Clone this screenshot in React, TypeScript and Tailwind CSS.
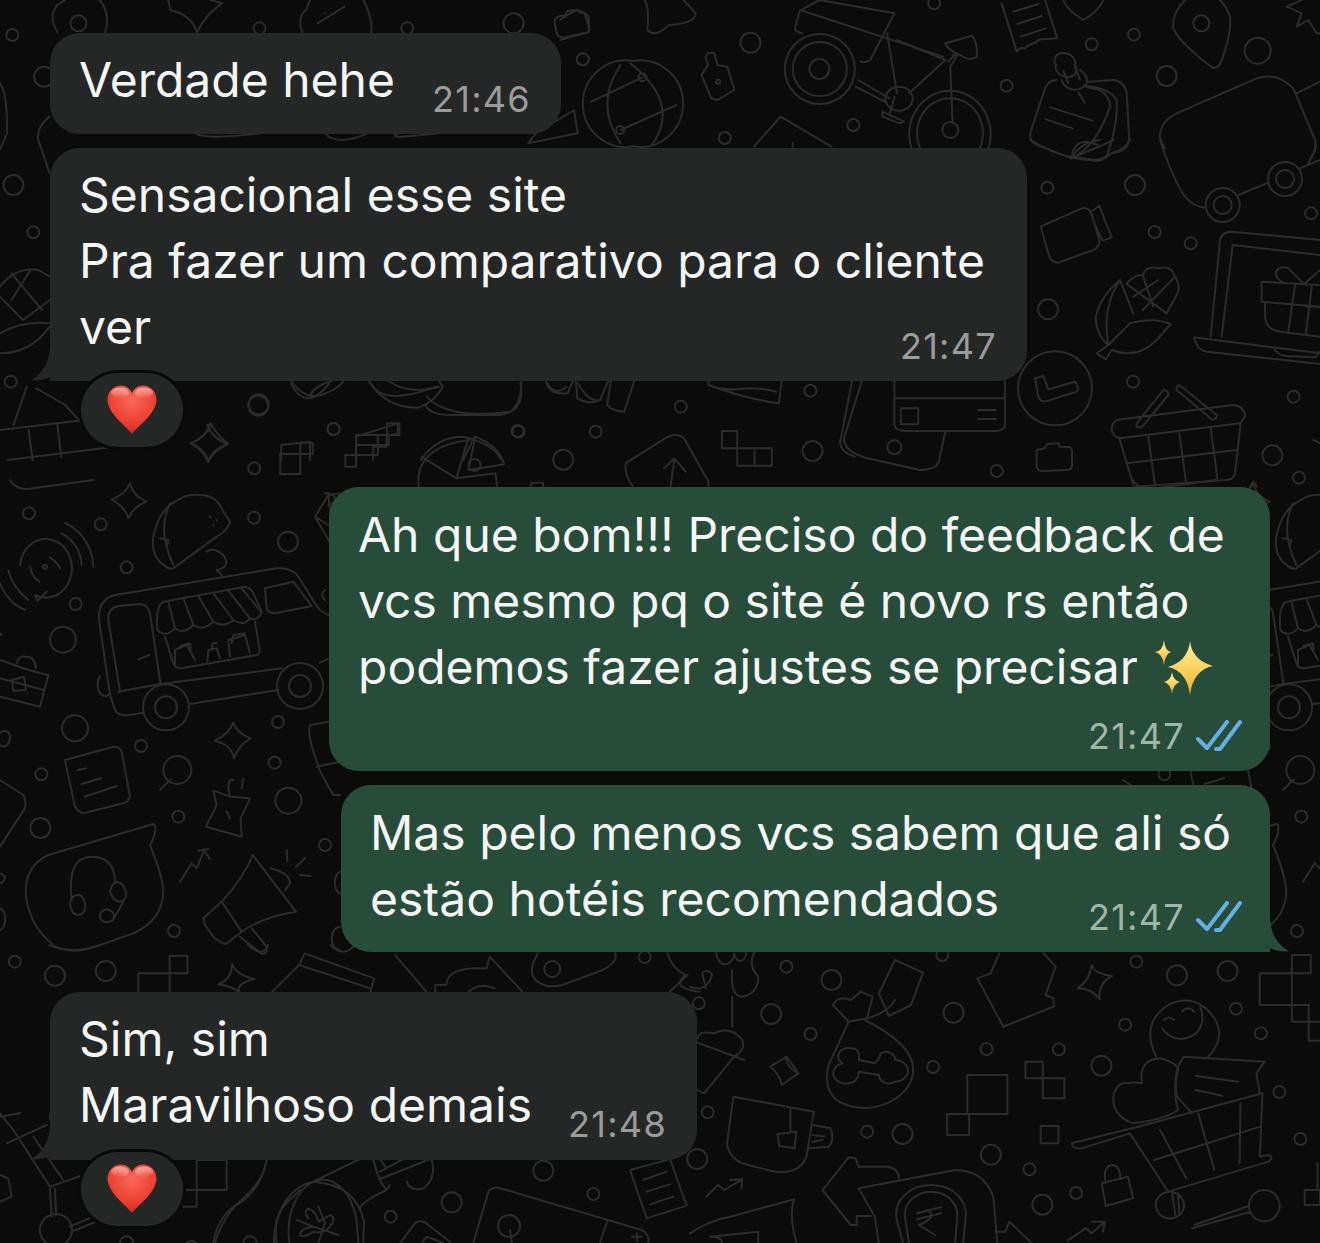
import React from "react";

type C = [number, number, number];
function Z({ x, y, sx = 3, sy = 3, c = [], p = [] }: { x: number; y: number; sx?: number; sy?: number; c?: C[]; p?: string[] }) {
  return (
    <g transform={`translate(${x} ${y}) scale(${1 / sx} ${1 / sy})`}>
      {c.map(([cx, cy, r], i) => (
        <ellipse key={i} cx={cx} cy={cy} rx={r * sx} ry={r * sy} vectorEffect="non-scaling-stroke" />
      ))}
      {p.map((d, i) => (
        <path key={i} d={d} vectorEffect="non-scaling-stroke" />
      ))}
    </g>
  );
}

const truckC: C[] = [[87,100,6],[302,133,6],[380,262,6],[227,372,6],[189,479,13],[762,113,6],[864,185,10],[225,745,13],[423,798,6],[124,883,6],[535,1010,6],[121,1044,10],[522,1353,6],[834,726,6],[824,848,6],[865,962,13],[975,1095,6],[498,682,23],[498,682,11],[900,618,23],[900,618,11],[532,870,14],[135,260,2]];
const truckP: string[] = [
  "M300 440 L330 645 L345 690 Q355 708 385 706 L430 698 M300 440 Q285 360 345 345 L830 265 Q875 262 895 290 L945 370 Q960 395 985 405",
  "M570 672 L835 630 M355 635 L480 612 L845 565 M960 548 L985 536",
  "M360 635 L325 420 Q322 385 355 378 L420 372 Q445 375 450 400 L482 615 M415 538 L448 525",
  "M795 325 L880 305 L935 378 L825 400 Q805 400 800 385 Z",
  "M472 450 Q465 380 490 365 L735 320 Q755 325 760 340 L785 395 Q775 425 750 415 Q730 440 700 420 Q670 445 640 425 Q610 455 580 435 Q550 465 525 445 Q495 475 472 450 Z",
  "M505 365 L525 445 M550 355 L580 435 M595 348 L640 425 M640 340 L700 420 M685 332 L750 415 M725 325 L783 395",
  "M495 470 L520 550 Q525 565 545 565 L770 525 Q782 520 778 505 L765 425",
  "M525 560 L525 510 L560 495 L585 540 M540 498 L570 490 L572 510 M622 545 L625 510 L650 505 L660 535 M635 505 L638 490 L650 490 M690 530 L685 480 L735 465 L750 520 M695 490 L700 465 L735 460",
  "M510 265 Q450 240 460 170 Q475 90 530 62 Q560 40 600 45 Q650 45 670 95 L690 125 Q685 150 650 170 L520 265 Q505 270 490 255 M510 70 Q470 150 520 255 M480 175 L505 180 L500 200",
  "M630 110 l1 1 M650 120 l1 1 M640 135 l1 1 M620 215 Q640 200 670 225 Q695 260 650 270 L665 285",
  "M390 10 Q400 50 440 65 Q400 80 385 115 Q375 80 335 58 Q375 45 390 10 Z",
  "M700 728 Q710 760 752 775 Q715 795 702 835 Q695 795 645 782 Q690 760 700 728 Z",
  "M60 255 A78 88 0 1 1 105 345 L112 362 L140 335 M90 260 Q95 290 118 305 M150 232 Q175 250 180 265 M185 160 Q240 190 245 255 M195 128 Q275 170 280 260 M25 270 Q35 320 85 360 M0 310 Q25 370 75 390",
  "M0 540 L85 570 L145 585 L120 680 L0 650 M0 595 L130 630 M35 600 L72 590 L78 630 L40 632 Z M50 550 Q55 525 80 530 Q105 530 108 565",
  "M195 840 L340 800 Q360 800 365 815 L390 950 Q385 965 370 970 L250 1000 Q235 995 225 980 Z M233 870 L258 865 M245 912 L303 895 M255 950 L350 918",
  "M480 930 L512 898","M0 900 L70 945 Q85 975 65 1000 L0 1100",
  "M700 900 Q685 895 685 925 L690 950 L640 932 L650 975 L618 1040 L725 1070 L722 1015 L750 955 L690 950 M730 895 L725 925 M680 995 L690 1015",
  "M540 1205 L575 1150 L590 1165 L612 1112 L630 1137 M595 1112 L625 1107",
  "M610 1315 L665 1265 Q730 1195 758 1125 L888 1295 Q790 1310 725 1355 L678 1392 Q660 1390 640 1370 L615 1335 Z M665 1265 L725 1355 M720 1370 L785 1422 Q805 1420 800 1400 L755 1345",
  "M812 1165 Q870 1180 870 1210 L855 1232 M860 1110 L862 1145 M888 1160 L915 1135 M900 1185 L932 1188",
  "M460 1032 L145 1125 Q70 1160 78 1250 Q90 1340 160 1395 Q210 1425 280 1402 L400 1360 Q490 1320 490 1230 Q485 1180 450 1095 Q470 1060 465 1035 Z",
  "M215 1260 Q200 1130 275 1130 Q345 1130 345 1210 M235 1245 Q210 1245 210 1275 Q215 1305 235 1305 Q260 1300 255 1270 Q250 1245 235 1245 M350 1205 Q335 1210 330 1235 Q340 1265 360 1265 Q380 1260 378 1240 Q375 1210 350 1205 M320 1288 Q295 1295 300 1315 Q315 1335 340 1320 Q350 1295 320 1288 M345 1310 L370 1265",
  "M300 590 A20 30 0 0 0 330 640 M1020 40 L985 45 L945 110 L1000 205 M945 110 L985 135 M990 90 L985 40 L975 40 A20 14 0 0 1 985 75",
  "M930 735 L985 725 M930 735 Q920 760 950 845 Q960 880 1000 945 L1020 945 M950 860 L1020 845",
  "M0 460 l5 5 M0 760 A20 30 0 0 1 30 765 A20 30 0 0 1 0 795 M0 1180 A20 20 0 0 1 15 1195 A20 20 0 0 1 0 1210 M0 1285 A20 30 0 0 1 15 1320 A20 30 0 0 1 0 1350",
  "M30 0 Q50 35 100 25 L280 0 M975 330 A18 18 0 0 0 975 360 M1020 1175 A25 35 0 0 0 1020 1240 M1020 1340 A25 35 0 0 0 1020 1410",
];

function Doodles() {
  return (
    <svg className="absolute inset-0" width="1320" height="1243" viewBox="0 0 1320 1243" fill="none" stroke="#2b2b2b" strokeWidth="2" strokeLinejoin="round" strokeLinecap="round">
      {/* top-left */}
      <Z x={0} y={0} sx={2.613} sy={3}
        c={[[32,105,6],[1064,85,6],[1342,70,10],[1523,178,6],[678,85,6],[115,230,10],[35,555,10],[87,697,6],[28,1145,6],[675,1217,10],[872,1287,6],[1355,1295,6],[205,70,8],[1240,1395,6]]}
        p={[
          "M150 97 Q125 50 150 15 L170 0","M260 0 Q290 40 275 97",
          "M440 0 L445 30 Q500 45 515 97 Q535 45 580 10 L550 0",
          "M790 97 Q775 50 800 30 L810 0","M970 97 Q975 60 950 0","M830 70 L900 20","M850 40 l0 1",
          "M1450 70 Q1448 50 1465 48 L1478 45 L1482 33 L1510 30 L1515 38 Q1535 38 1538 50 L1540 90 Q1540 100 1525 100 L1475 112 Q1460 115 1455 100 Z",
          "M0 250 Q20 280 18 400 L0 450",
          "M130 350 Q95 380 100 420 L130 520",
          "M0 860 Q40 800 100 810 L130 830 M0 890 L60 960 L130 900 M30 820 L110 930 M80 810 L30 900 M0 1060 Q80 1060 130 980 M0 1000 Q60 960 130 970",
          "M1400 400 L1500 330 L1510 400 L1380 430 Z",
          "M1145 400 Q1000 420 1040 400 M510 400 Q540 420 680 400 M850 400 Q880 440 960 400",
          "M70 1160 L35 1275 M95 1165 L170 1215 L230 1290 M0 1290 L220 1260 M20 1380 L300 1340 M75 1290 L85 1380 M150 1275 L160 1370",
          "M500 1330 Q540 1310 550 1270 Q570 1310 595 1330 Q555 1350 545 1380 Q530 1345 500 1330",
          "M735 1380 L735 1335 L810 1325 L810 1380 M930 1380 L930 1310 L1040 1270 L1040 1300 L1010 1310 L1010 1340 L975 1340 L975 1380",
          "M1100 1380 Q1140 1310 1210 1310 Q1290 1330 1310 1380 M1240 1310 L1210 1380",
          "M760 1150 Q800 1240 860 1150 M970 1150 Q1000 1220 1140 1160 M1115 1190 Q1170 1260 1330 1235 Q1370 1220 1360 1150",
          "M1430 1150 Q1450 1190 1480 1160 M1510 1150 Q1540 1210 1568 1200",
        ]}
      />
      {/* bike, globe, lock */}
      <Z x={560} y={0} sx={2.063} sy={3}
        c={[[47,178,6],[393,128,10],[605,375,6],[340,414,6],[772,10,6],[535,207,10],[536,207,35],[536,207,27],[805,390,8],[170,232,4],[124,390,4],[326,245,2]]}
        p={[
          "M0 60 Q25 35 35 30 L50 38 Q60 80 60 95 L0 120",
          "M175 0 Q185 30 180 90 Q195 115 225 75 Q280 70 280 40 L255 0",
          "M150 183 A88 130 0 1 1 151 439 A88 130 0 1 1 150 183",
          "M125 195 Q70 310 125 430 M145 190 Q250 310 190 435 M65 305 L170 232 M125 390 L240 315",
          "M300 170 L305 160 L318 158 L325 195 L345 200 L360 270 L325 300 L312 295 L292 225 L305 195 Z",
          "M495 30 L485 85 Q485 95 500 100 M495 30 L790 170 M535 0 L690 40 L640 180 Q630 190 620 185 M500 28 L535 0",
          "M675 100 L695 280 M695 120 L795 180 L720 280 M810 165 L820 165 L805 200 L810 370 M615 240 L680 295 M610 260 L670 305 M700 260 A28 36 0 1 1 699 260 M690 290 L680 345 M665 335 L710 365 L700 370 L665 350 Z",
          "M795 130 L850 107 Q862 130 860 170 Q845 185 825 165 Q800 150 795 130 Z M815 165 L800 185",
          "M805 272 A84 130 0 1 1 804 272 M805 295 A68 105 0 1 1 804 295",
          "M400 440 L455 350 L560 440","M480 430 l0 10",
        ]}
      />
      {/* top right: receipt, pinned note, map pin, blob */}
      <Z x={1000} y={0}
        c={[[20,257,6],[275,133,6],[402,104,6],[604,70,8],[773,152,13],[500,228,10]]}
        p={[
          "M5 10 L50 155 Q60 140 75 145 Q90 130 105 130 Q115 115 130 118 L172 115 L135 0 M40 35 L115 12 M52 72 L125 48 M62 110 L137 85",
          "M190 0 Q200 30 250 60 Q300 30 310 0",
          "M168 195 A32 25 20 1 1 225 195 A32 25 20 1 1 168 195 M190 212 L205 250 M225 200 L240 240 M185 240 A40 35 0 0 0 260 250 Q265 225 240 210 M235 278 L255 308",
          "M170 240 Q145 240 135 265 L92 395 Q85 420 110 435 L215 475 Q290 440 330 320 Q330 290 300 270 L250 258",
          "M260 258 Q330 265 350 300 Q355 370 320 470 Q300 490 270 478 L215 470 M265 245 L340 240 Q375 245 380 280 L388 420 Q380 455 340 458",
          "M215 470 Q222 425 260 425 L295 435 M150 322 L278 362 M138 358 L218 385",
          "M555 0 Q515 40 520 85 Q540 130 640 205 Q660 200 665 180 Q695 100 690 50 Q680 20 660 0",
          "M480 410 Q480 365 530 340 L770 235 Q830 215 880 265 L945 420 Q950 450 925 490 M480 410 Q485 430 495 445",
          "M890 280 L960 245 M860 20 L905 0 M860 20 L905 40 L890 80 L925 60 L950 100 L960 100",
        ]}
      />
      {/* right column */}
      <Z x={1020} y={140}
        c={[[82,143,6],[345,135,10],[404,276,6],[512,310,6],[873,220,6],[84,508,10],[339,725,6],[821,770,6],[757,946,10],[837,1013,6],[105,745,37],[608,195,17],[608,195,9],[795,117,17],[795,117,9]]}
        p={[
          "M420 0 Q460 120 495 170 Q520 200 555 203","M655 165 L745 128","M840 85 L900 60","M885 0 Q895 30 870 55",
          "M62 260 L185 205 Q205 200 215 222 L238 300 Q238 320 225 328 L115 368 Q95 368 88 350 Z","M212 215 L238 198 L275 292 L248 302 L225 255",
          "M45 715 L70 708 L85 748 L165 725 Q180 745 170 755 L75 785 Q60 785 55 770 Z",
          "M50 930 L75 925 L80 912 L115 910 L120 920 L150 922 Q157 925 156 940 L156 975 Q155 990 140 990 L65 993 Q52 992 50 980 Z",
          "M30 0 Q100 40 165 55 Q240 70 275 40 Q315 30 330 0 M155 55 Q175 10 240 0 M175 45 Q240 20 280 0",
          "M300 420 Q240 470 228 530 Q225 580 265 615 L230 640 L258 658 L275 630 Q350 660 410 600 L452 552 Q400 530 330 550 L265 615 Q245 500 300 420 M300 420 L340 520 M320 432 L440 520",
          "M320 430 Q340 405 368 405 Q380 375 415 385 Q455 375 465 410 Q485 440 470 465 L440 520 M368 405 L400 500 M340 470 L415 420 M368 510 L465 410",
          "M572 590 L600 300 Q605 275 635 275 L900 300 M605 590 L638 315 L900 345",
          "M522 592 L900 640 M522 592 Q530 630 560 635 L900 672 M760 622 Q770 645 800 648 L880 652 Q895 650 895 635",
          "M725 425 L725 485 L900 500 M725 425 L900 435 M735 490 L735 530 Q738 570 780 575 L900 590 M825 435 L805 575 M875 440 L858 580",
          "M850 430 L805 385 Q780 375 768 395 Q765 415 790 428 M855 430 L900 390 M860 500 L900 500",
          "M275 870 Q275 840 305 838 L640 795 Q675 800 675 830 L660 850 L300 895 Q280 890 275 870",
          "M298 895 L340 1035 M662 850 L645 1000 Q640 1020 620 1020 L345 1040 M385 890 L405 1035 M478 880 L498 1025 M572 865 L592 1015 M320 970 L650 930",
          "M350 850 L430 750 Q445 750 445 765 L365 862 Q345 865 350 850 M478 735 L590 825 Q590 840 575 838 L470 750 Q468 738 478 735",
          "M880 900 L900 910 M690 1040 L700 1025 L710 1040",
        ]}
      />
      {/* under bubble 2 */}
      <Z x={180} y={375} sx={1.845} sy={3}
        c={[[145,88,10],[283,162,6],[623,168,6],[767,170,6],[707,254,10],[137,280,6],[924,95,6],[1163,47,6],[1167,228,10],[1507,288,6],[1318,217,7]]}
        p={[
          "M50 150 Q60 190 88 208 Q62 225 52 262 Q42 222 20 205 Q45 190 58 150 Z",
          "M205 18 Q230 75 260 60 Q290 45 302 18 M240 60 Q250 30 280 18",
          "M348 18 Q380 100 440 98 Q470 80 485 35 L478 18 M385 18 Q420 60 478 35 M452 88 Q460 120 500 120 L590 120 Q630 115 630 18",
          "M675 18 Q680 60 715 55 L725 18 M730 18 L733 70 Q755 90 775 75 L790 18 M795 18 L788 90 Q800 110 820 110 L838 18",
          "M975 30 Q1040 70 1105 85 L1110 18 M975 18 L975 30 Q1000 50 1050 40 Q1080 40 1100 50",
          "M1258 18 L1225 190 Q1225 230 1265 248 L1365 285 Q1395 285 1400 260 L1412 170",
          "M1240 18 L1218 200 Q1218 230 1245 245",
          "M1318 18 L1318 150 Q1320 168 1340 168 L1500 168 Q1522 168 1522 150 L1522 18 M1318 70 L1522 70",
          "M1330 100 L1362 100 L1362 148 L1330 148 Z M1472 105 L1505 105 M1472 132 L1505 132",
          "M185 297 L185 237 L245 237 L245 203 L222 203 L222 297 Z M185 237 L222 237",
          "M305 275 L305 240 L365 240 L365 180 L325 180 L325 275 Z M305 240 L325 240 M325 210 L365 210 M365 180 L385 180 L385 210 L365 210 M385 180 L405 180 L405 145 L382 145 L382 180",
          "M535 195 Q450 210 440 300 L440 333 M445 245 L510 310 L530 200 M545 185 Q590 215 598 268 L532 285 Z M510 310 L582 295 L585 333",
          "M822 265 L895 190 Q915 170 930 190 L975 320 L975 333 M822 265 Q820 300 835 333 M893 280 L912 250 L933 290 M912 255 L905 333",
          "M1000 168 L1028 168 L1028 220 L1092 220 L1092 272 L1028 272 L1028 220 L1000 220 Z M1060 220 L1060 272",
          "M648 333 L648 323 L670 323 L670 333",
        ]}
      />
      {/* truck block, repeated at the right edge */}
      <Z x={0} y={480} c={truckC} p={truckP} />
      <Z x={1123} y={480} c={truckC} p={truckP} />
      {/* lower left gap */}
      <Z x={0} y={945} sx={2.24} sy={3}
        c={[[33,50,6],[123,92,10],[237,78,10],[1444,36,6],[1237,72,8]]}
        p={[
          "M110 0 Q160 30 225 0","M555 0 Q590 40 600 0","M740 0 Q770 40 795 0",
          "M310 140 L310 85 L420 85 L420 32 L380 32 L380 140",
          "M520 58 Q530 90 570 102 Q530 115 535 140 M520 58 Q520 100 490 118 Q520 125 535 140",
          "M610 140 L670 60 L682 25 L838 100 L830 140 M670 60 L830 130",
          "M885 30 L955 140 M975 140 L975 120 L1000 120 Q1000 75 1060 70 L1090 70 L1097 35 L1170 140 M1050 140 Q1075 110 1108 130",
          "M1205 25 Q1175 90 1210 115 Q1235 135 1280 110 L1350 75 Q1385 50 1378 25",
          "M1495 25 Q1505 70 1535 90 Q1500 130 1568 140 M1500 140 L1540 90",
        ]}
      />
      {/* lower right */}
      <Z x={690} y={950} sx={2.489} sy={3}
        c={[[240,50,6],[352,90,10],[202,192,10],[300,252,6],[656,188,10],[605,351,6],[738,297,6],[918,298,6],[1024,347,10],[1083,224,6],[1212,76,10],[1338,63,10],[1359,176,6],[1421,250,6],[1467,426,6],[1519,567,6],[44,487,6],[441,545,6],[529,552,10],[749,614,10],[845,658,6],[961,729,6],[877,764,10],[1111,35,6],[18,627,10],[628,15,6],[22,160,6]]}
        p={[
          "M0 110 Q40 130 55 75 A15 20 0 0 0 30 70 L40 115 M165 0 Q140 40 170 80 Q170 130 130 140 Q100 140 105 60 M65 0 A15 25 0 0 0 110 10 A15 25 0 0 0 140 5 M105 140 L105 230 M0 270 L135 330 M20 265 Q20 240 60 250 Q100 225 130 270 Q140 300 110 320 L35 430 L0 410",
          "M200 350 L240 320 L270 370 L228 405 Q225 375 200 350 M237 322 Q245 360 270 370",
          "M355 165 Q370 135 400 150 L425 125 L455 140 L440 205 L395 215 Z",
          "M395 215 L345 345 Q330 420 370 455 Q430 490 490 460 Q560 420 555 350 Q550 280 435 210",
          "M400 295 A25 25 0 0 0 380 340 A25 25 0 0 0 395 400 Q420 395 420 365 L470 375 A25 25 0 0 0 510 395 A22 22 0 0 0 510 330 A22 22 0 0 0 475 310 Q470 330 460 340 L420 330 Q425 295 400 295 Z",
          "M440 205 Q490 190 510 150 M470 130 L510 30 L580 68 L550 165 L495 198 Z",
          "M770 10 L748 70 L715 85 L780 230 L905 170 L905 145 L885 135 L910 50 L880 10",
          "M1000 45 Q1005 70 1050 78 Q1015 100 1020 148 Q1000 115 965 115 Q995 90 1000 45 Z",
          "M108 440 L308 485 L290 620 Q270 680 200 662 L130 640 Q95 620 92 580 Z M250 475 L250 545 M218 552 L265 545 L260 595 L222 588 Z M305 525 L350 535 Q360 570 345 590 L298 595 M305 555 L335 560 M305 575 L330 570",
          "M690 375 L790 375 L790 492 L690 492 Z M640 492 L695 492 L695 555 L640 555 Z",
          "M835 335 L878 335 L878 385 L835 385 Z M878 385 L932 385 L932 445 L878 445 Z","M873 528 L917 528 L917 580 L873 580 Z",
          "M1418 70 L1498 70 L1498 165 L1418 165 Z M1498 15 L1545 15 L1545 70 L1498 70 Z M1498 165 L1540 165 L1540 215 L1498 215 Z M1540 215 L1568 215 M1540 215 L1540 272 L1568 272",
          "M1160 320 Q1120 220 1190 165 Q1260 125 1305 205 Q1335 265 1290 320 M1175 235 Q1210 290 1260 250 Q1285 215 1270 170 M1180 210 Q1190 195 1205 210 M1225 185 Q1240 165 1255 185",
          "M1090 400 Q1070 390 1055 430 Q1045 490 1100 520 M1125 400 Q1115 330 1170 325 Q1215 340 1215 360 Q1200 430 1215 480 Q1180 510 1100 520 M1125 400 Q1100 395 1090 400",
          "M1230 320 L1430 335 L1410 370 L1418 430 M1230 320 Q1200 360 1212 440 L1250 490 M1260 378 L1365 395 M1258 420 L1325 437",
          "M1425 430 L1115 530 L950 580 Q955 600 975 595 L1095 550 L1190 725 L1440 635 Q1455 620 1440 615 L1418 620 Z M1170 540 L1235 685 M1265 490 L1305 660 M1370 460 L1368 640 M1155 630 L1420 530",
          "M1200 730 L1208 795 M1215 730 L1218 795 A35 40 0 1 0 1217 796 M1255 825 L1390 768 M1250 835 L1395 785 M1430 720 A38 47 0 1 1 1429 720",
          "M40 740 L70 705 L85 720 L130 688 M100 690 L130 688 L128 715",
          "M330 720 L395 622 L412 625 L420 650 L490 650 Q520 655 520 685 M330 720 L400 825 L415 825 L415 798 L450 798 M420 715 L660 660 Q730 660 755 740 L765 879 M420 715 L460 800 L470 879",
          "M600 705 A85 88 0 0 0 515 810 L530 879 M600 705 A85 88 0 0 1 685 810 L680 879 M600 725 A65 70 0 0 0 535 800 L545 879 M600 725 A65 70 0 0 1 665 800 L660 879",
          "M565 790 L625 772 M565 808 L625 790 M590 780 Q620 800 570 825 L610 855",
          "M760 845 L785 845 L795 815 L850 879",
          "M0 850 Q50 810 100 800 L260 748 Q245 790 265 879 M50 860 L170 845 L170 879 M50 860 Q80 860 80 879",
          "M1025 700 L1090 680 L1103 745 L1035 768 Z M1035 700 Q1025 645 1055 645 Q1070 650 1072 688",
          "M940 872 L985 835 L1000 850 L1032 815 M1000 815 L1032 815 L1028 845",
          "M1530 720 L1568 720 L1568 765 L1530 765 Z M1562 640 L1562 720",
        ]}
      />
      {/* bottom middle */}
      <Z x={180} y={1155}
        c={[[815,142,10],[632,185,6],[1090,47,10],[1240,117,6],[987,213,11]]}
        p={[
          "M260 12 Q255 70 190 130 Q130 180 105 264",
          "M282 264 A138 180 0 0 1 400 80 L540 12 M400 80 Q530 90 552 200 L550 264 M328 264 A85 130 0 0 1 530 200 L535 264",
          "M540 160 Q545 140 620 105 Q595 80 580 12 M600 72 L750 12 M600 50 L670 12 M620 40 L600 12 M620 105 L630 90 M755 15 Q770 70 730 100 Q690 110 680 80",
          "M385 190 Q370 170 385 160 Q410 170 415 200 L450 180 Q475 190 440 225 Q420 235 400 230 Q370 250 360 240 Q360 220 400 215 M415 155 L435 205 L415 264 M350 195 L400 215 L475 240",
          "M660 264 L705 205 Q725 190 745 210 L815 264 M725 264 L740 245 L790 264",
          "M880 264 L925 110 Q935 95 955 98 L1385 225 Q1410 240 1405 264 M1282 195 L1260 264 M1370 235 L1372 258 M1355 245 L1385 245 M990 225 L995 264",
          "M1350 45 L1470 12 L1520 152 L1400 190 Z",
          "M1390 75 L1460 50 M1400 110 L1470 88 M1410 148 L1480 125",
        ]}
      />
      {/* bottom left */}
      <Z x={0} y={1100}
        c={[[168,390,16]]}
        p={[
          "M0 40 L40 90 L150 260 L250 225 M20 130 L140 75 M100 110 L190 240 M0 50 L60 40 M150 60 L150 40",
          "M150 265 L155 350 M165 265 L168 345 M210 380 L290 345 M215 395 L300 360",
          "M0 225 L25 235 L35 290 L0 305",
          "M590 180 L680 180 L680 270 L590 270 Z M550 270 L590 270 L590 320 L550 320",
          "M800 180 Q780 280 700 320 Q650 360 640 429 M830 429 Q815 340 880 290 L900 270",
          "M360 429 A20 20 0 0 1 400 429 M560 429 A20 20 0 0 1 590 429 M730 429 A20 20 0 0 1 770 429",
        ]}
      />
    </svg>
  );
}

function Tail({ right = false }: { right?: boolean }) {
  return (
    <svg
      className={`absolute bottom-0 ${right ? "-right-[19px] -scale-x-100" : "-left-[19px]"}`}
      width="56"
      height="36"
      viewBox="0 0 56 36"
      fill={right ? "#274c39" : "#252727"}
    >
      <path d="M19 0 Q19 24 0 35.5 Q18 36 29 26 Q38 36 56 36 L56 0 Z" />
    </svg>
  );
}

function Heart({ id }: { id: string }) {
  return (
    <svg width="50" height="50" viewBox="0 0 50 50">
      <defs>
        <radialGradient id={id} cx="0.5" cy="0.3" r="0.75">
          <stop offset="0" stopColor="#f96a5a" />
          <stop offset="0.6" stopColor="#ec4133" />
          <stop offset="1" stopColor="#c9261c" />
        </radialGradient>
        <linearGradient id={`${id}s`} x1="0" y1="0" x2="0" y2="1">
          <stop offset="0" stopColor="#ffffff" stopOpacity="0.55" />
          <stop offset="1" stopColor="#ffffff" stopOpacity="0" />
        </linearGradient>
      </defs>
      <path d="M25 49 C20 42 1 29 0.5 15 C0.5 6 7 0.5 14 0.5 C19 0.5 23 3.5 25 8 C27 3.5 31 0.5 36 0.5 C43 0.5 49.5 6 49.5 15 C49 29 30 42 25 49 Z" fill={`url(#${id})`} />
      <ellipse cx="13" cy="8" rx="9" ry="5.5" fill={`url(#${id}s)`} />
      <ellipse cx="37" cy="8" rx="9" ry="5.5" fill={`url(#${id}s)`} />
    </svg>
  );
}

function Sparkles() {
  return (
    <svg width="58" height="56" viewBox="0 0 58 56" className="mb-[-2px] ml-[17px]">
      <defs>
        <linearGradient id="spk" x1="0" y1="0" x2="0" y2="1">
          <stop offset="0" stopColor="#fff0a0" />
          <stop offset="0.6" stopColor="#f8cf55" />
          <stop offset="1" stopColor="#e8a92e" />
        </linearGradient>
      </defs>
      <path fill="url(#spk)" d="M35 1 Q37 20 58 26 Q38 30 35 55 Q32 31 13 27 Q33 21 35 1 Z" />
      <path fill="url(#spk)" d="M9 0 Q10 11 16 12 Q10 14 9 25 Q8 14 0 12 Q8 11 9 0 Z" />
      <path fill="url(#spk)" d="M17 32 Q18 40 25 42 Q18 44 17 54 Q16 44 9 42 Q16 40 17 32 Z" />
    </svg>
  );
}

function Ticks() {
  return (
    <svg width="46" height="32" viewBox="0 0 46 32" fill="none" stroke="#62b1e2" strokeWidth="4" strokeLinecap="round" strokeLinejoin="round">
      <path d="M2 19 L11 28 L31 2" />
      <path d="M20 29 L24 29 L44 2" />
    </svg>
  );
}

const textCls = "text-[48px] leading-[66px] text-[#f4f5f5] whitespace-nowrap";
const timeGrey = "text-[36px] leading-[36px] tracking-[1.3px] text-[#9a9b9b] whitespace-nowrap";
const timeGreen = "text-[36px] leading-[36px] tracking-[1.3px] text-[#9fb6a9] whitespace-nowrap";

function Reaction({ id }: { id: string }) {
  return (
    <div className="relative z-10 -mt-[8px] ml-[31px] flex h-[74px] w-[102px] items-center justify-center rounded-full bg-[#252727] ring-[3px] ring-[#0a0a0a]">
      <Heart id={id} />
    </div>
  );
}

export default function App() {
  return (
    <div className="relative h-[1243px] w-[1320px] overflow-hidden bg-[#0b0b0b]" style={{ fontFamily: '"Inter", "Liberation Sans", sans-serif' }}>
      <Doodles />
      <div className="relative flex flex-col items-start px-[50px] pt-[33px]">
        <div className="flex w-[511px] items-end justify-between rounded-[30px] bg-[#252727] pb-[17px] pl-[29px] pr-[30px] pt-[14px]">
          <div className={`${textCls} mb-[4px]`}>Verdade hehe</div>
          <div className={timeGrey}>21:46</div>
        </div>

        <div className="relative mt-[14px] flex w-[977px] items-end justify-between rounded-[30px] rounded-bl-none bg-[#252727] pb-[17px] pl-[29px] pr-[30px] pt-[14px]">
          <Tail />
          <div className={`${textCls} relative mb-[4px]`}>
            <div>Sensacional esse site</div>
            <div>Pra fazer um comparativo para o cliente</div>
            <div>ver</div>
          </div>
          <div className={`${timeGrey} relative -ml-[300px]`}>21:47</div>
        </div>
        <Reaction id="h1" />

        <div className="mt-[40px] flex w-[941px] flex-col self-end rounded-[30px] bg-[#274c39] pb-[17px] pl-[29px] pr-[28px] pt-[15px]">
          <div className={textCls}>
            <div>Ah que bom!!! Preciso do feedback de</div>
            <div>vcs mesmo pq o site é novo rs então</div>
            <div className="flex items-center">podemos fazer ajustes se precisar<Sparkles /></div>
          </div>
          <div className="mt-[18px] flex items-center justify-end gap-[11px]">
            <div className={timeGreen}>21:47</div>
            <Ticks />
          </div>
        </div>

        <div className="relative mt-[14px] flex w-[929px] items-end justify-between self-end rounded-[30px] rounded-br-none bg-[#274c39] pb-[17px] pl-[29px] pr-[28px] pt-[15px]">
          <Tail right />
          <div className={`${textCls} relative mb-[3px]`}>
            <div>Mas pelo menos vcs sabem que ali só</div>
            <div>estão hotéis recomendados</div>
          </div>
          <div className="relative -ml-[300px] flex items-center gap-[11px]">
            <div className={timeGreen}>21:47</div>
            <Ticks />
          </div>
        </div>

        <div className="relative mt-[40px] flex w-[647px] items-end justify-between rounded-[30px] rounded-bl-none bg-[#252727] pb-[18px] pl-[29px] pr-[30px] pt-[14px]">
          <Tail />
          <div className={`${textCls} relative mb-[4px]`}>
            <div>Sim, sim</div>
            <div>Maravilhoso demais</div>
          </div>
          <div className={`${timeGrey} relative`}>21:48</div>
        </div>
        <Reaction id="h2" />
      </div>
    </div>
  );
}
